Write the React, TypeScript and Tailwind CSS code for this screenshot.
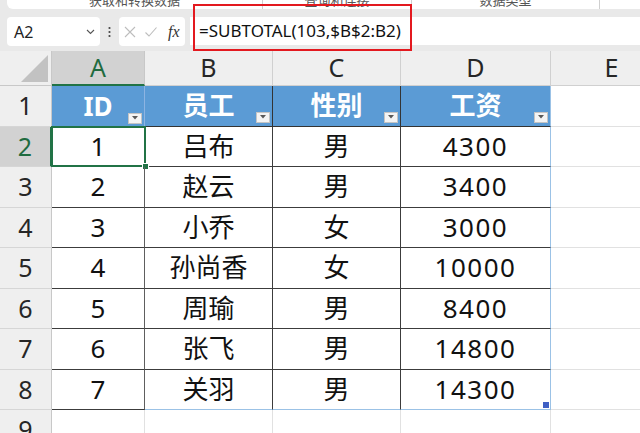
import React from "react";

const FONT = "font-['Noto_Sans','Noto_Sans_CJK_SC',sans-serif]";

const rows: [number, string, string, number][] = [
  [1, "吕布", "男", 4300],
  [2, "赵云", "男", 3400],
  [3, "小乔", "女", 3000],
  [4, "孙尚香", "女", 10000],
  [5, "周瑜", "男", 8400],
  [6, "张飞", "男", 14800],
  [7, "关羽", "男", 14300],
];

function FilterBtn() {
  return (
    <div className="absolute right-[2px] bottom-[3px] w-[14px] h-[11px] bg-[#f4f4f4] border border-[#c4c4c4] flex items-center justify-center">
      <svg width="6" height="4" viewBox="0 0 6 4">
        <polygon points="0,0 6,0 3,3.5" fill="#595959" />
      </svg>
    </div>
  );
}

function RowHead({ n, sel }: { n: number; sel?: boolean }) {
  return (
    <div
      className={
        "w-[52px] shrink-0 flex items-center justify-center text-[25px] border-b border-[#d6d6d6] " +
        (sel
          ? "bg-[#d2d2d2] text-[#1f6b3f] border-r-2 border-r-[#217346]"
          : "bg-[#efefef] text-[#262626] border-r border-r-[#c8c8c8]")
      }
    >
      {n}
    </div>
  );
}

export default function App() {
  return (
    <div className={"w-[640px] h-[433px] overflow-hidden bg-[#e9e9e9] relative " + FONT}>
      {/* ribbon bottom strip */}
      <div className="h-[14px] pl-[7px]">
        <div className="h-[9px] bg-white rounded-bl-[6px] flex overflow-hidden text-[13px] text-[#555]">
          <div className="w-[256px] border-r border-[#cfcfcf] flex items-end justify-center">
            <span className="leading-[13px] mb-[2px]">获取和转换数据</span>
          </div>
          <div className="w-[149px] border-r border-[#cfcfcf] flex items-end justify-center">
            <span className="leading-[13px] mb-[2px]">查询和连接</span>
          </div>
          <div className="w-[188px] border-r border-[#cfcfcf] flex items-end justify-center">
            <span className="leading-[13px] mb-[2px]">数据类型</span>
          </div>
          <div className="flex-1" />
        </div>
      </div>

      {/* formula bar */}
      <div className="h-[37px] flex items-start pt-[3px]">
        <div className="ml-[7px] w-[93px] h-[29px] bg-white rounded-[4px] flex items-center justify-between pl-[7px] pr-[5px]">
          <span className="text-[16px] text-[#222]">A2</span>
          <svg width="9" height="6" viewBox="0 0 9 6">
            <polyline points="1,1 4.5,4.5 8,1" fill="none" stroke="#555" strokeWidth="1.1" />
          </svg>
        </div>
        <div className="w-[19px] h-[29px] flex items-center justify-center">
          <svg width="3" height="12" viewBox="0 0 3 12">
            <circle cx="1.5" cy="2" r="1.1" fill="#444" />
            <circle cx="1.5" cy="6" r="1.1" fill="#444" />
            <circle cx="1.5" cy="10" r="1.1" fill="#444" />
          </svg>
        </div>
        <div className="w-[66px] h-[29px] bg-white rounded-[4px] flex items-center pl-[4px] gap-[7px]">
          <svg width="14" height="14" viewBox="0 0 14 14">
            <path d="M2 2 L12 12 M12 2 L2 12" stroke="#bdbdbd" strokeWidth="1.1" />
          </svg>
          <svg width="14" height="14" viewBox="0 0 14 14">
            <path d="M1.5 7.5 L5 11 L12.5 2.5" fill="none" stroke="#bdbdbd" strokeWidth="1.1" />
          </svg>
          <span className="font-['Liberation_Serif',serif] italic text-[16px] text-[#333] leading-none ml-[3px]">
            fx
          </span>
        </div>
        <div className="ml-[5px] flex-1 h-[28px] bg-white flex items-center pl-[9px] text-[17px] text-[#111]">
          =SUBTOTAL(103,$B$2:B2)
        </div>
      </div>

      {/* grid */}
      <div className="flex flex-col bg-white">
        {/* column headers */}
        <div className="h-[35px] flex">
          <div className="w-[52px] shrink-0 bg-[#efefef] border-r border-b border-[#c8c8c8] relative">
            <svg className="absolute left-0 top-0" width="52" height="35" viewBox="0 0 52 35">
              <polygon points="48,4 48,31 21,31" fill="#c2c2c2" />
            </svg>
          </div>
          <div className="w-[93px] shrink-0 bg-[#d2d2d2] text-[#1f6b3f] border-r border-[#c8c8c8] border-b-2 border-b-[#217346] flex items-center justify-center text-[25px]">
            A
          </div>
          {[
            ["B", "w-[128px]"],
            ["C", "w-[128px]"],
            ["D", "w-[150px]"],
          ].map(([l, w]) => (
            <div
              key={l}
              className={w + " shrink-0 bg-[#efefef] text-[#262626] border-r border-b border-[#d0d0d0] flex items-center justify-center text-[25px]"}
            >
              {l}
            </div>
          ))}
          <div className="w-[122px] shrink-0 bg-[#efefef] text-[#262626] border-r border-b border-[#d0d0d0] flex items-center justify-center text-[25px]">
            E
          </div>
          <div className="flex-1 bg-[#efefef] border-b border-[#d0d0d0]" />
        </div>

        {/* row 1: table header */}
        <div className="h-[40.5px] flex">
          <RowHead n={1} />
          <div className="w-[93px] shrink-0 relative bg-[#5b9bd5] border-r border-[#8db4e2] flex items-center justify-center text-white font-bold text-[26px]">
            ID
            <FilterBtn />
          </div>
          <div className="w-[128px] shrink-0 relative bg-[#5b9bd5] border-r border-b border-[#333] flex items-center justify-center text-white font-bold text-[26px]">
            员工
            <FilterBtn />
          </div>
          <div className="w-[128px] shrink-0 relative bg-[#5b9bd5] border-r border-b border-[#333] flex items-center justify-center text-white font-bold text-[26px]">
            性别
            <FilterBtn />
          </div>
          <div className="w-[150px] shrink-0 relative bg-[#5b9bd5] border-r border-r-[#9bc2e6] border-b border-b-[#333] flex items-center justify-center text-white font-bold text-[26px]">
            工资
            <FilterBtn />
          </div>
          <div className="flex-1 border-b border-[#e1e1e1]" />
        </div>

        {rows.map(([id, name, sex, pay], i) => {
          const last = i === rows.length - 1;
          const rowN = i + 2;
          const bBot = last ? "border-b-[#9bc2e6]" : "border-b-[#3c3c3c]";
          return (
            <div key={id} className="h-[40.5px] flex text-[26px] text-[#111]">
              <RowHead n={rowN} sel={rowN === 2} />
              <div className="w-[93px] shrink-0 relative border-r border-r-[#5e5e5e] border-b border-b-[#3c3c3c] flex items-center justify-center">
                {id}
                {rowN === 2 && (
                  <div className="absolute left-[-1px] top-[-1px] right-[-2px] bottom-[-1px] border-2 border-[#217346]">
                    <div className="absolute right-[-5px] bottom-[-5px] w-[7px] h-[7px] bg-[#217346] border border-white" />
                  </div>
                )}
              </div>
              <div className={"w-[128px] shrink-0 border-r border-r-[#3c3c3c] border-b flex items-center justify-center " + bBot}>
                {name}
              </div>
              <div className={"w-[128px] shrink-0 border-r border-r-[#3c3c3c] border-b flex items-center justify-center " + bBot}>
                {sex}
              </div>
              <div className={"w-[150px] shrink-0 relative border-r border-r-[#9bc2e6] border-b flex items-center justify-center tracking-[1.5px] " + bBot}>
                {pay}
                {last && <div className="absolute right-[1px] bottom-[1px] w-[6px] h-[6px] bg-[#3f5fc4]" />}
              </div>
              <div className="w-[122px] shrink-0 border-r border-b border-[#e1e1e1]" />
              <div className="flex-1 border-b border-[#e1e1e1]" />
            </div>
          );
        })}

        {/* row 9 */}
        <div className="h-[40.5px] flex">
          <RowHead n={9} />
          <div className="w-[93px] shrink-0 border-r border-b border-[#e1e1e1]" />
          <div className="w-[128px] shrink-0 border-r border-b border-[#e1e1e1]" />
          <div className="w-[128px] shrink-0 border-r border-b border-[#e1e1e1]" />
          <div className="w-[150px] shrink-0 border-r border-b border-[#e1e1e1]" />
          <div className="w-[122px] shrink-0 border-r border-b border-[#e1e1e1]" />
          <div className="flex-1 border-b border-[#e1e1e1]" />
        </div>
      </div>

      {/* red highlight box */}
      <div className="absolute left-[193px] top-[4px] w-[219px] h-[47px] border-2 border-[#e3191f]" />
    </div>
  );
}
